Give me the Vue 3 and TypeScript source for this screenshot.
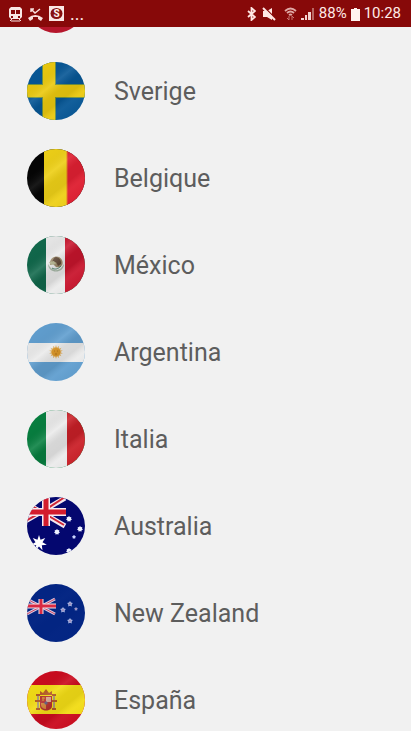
<script setup lang="ts">
type Shape = { d: string; fill?: string; stroke?: string; width?: number }
interface Country {
  id: string
  name: string
  base: string
  shapes: Shape[]
  gloss: number
}

/** Star polygon with alternating outer and inner radius. */
function star(cx: number, cy: number, r: number, points = 7, ratio = 0.45): string {
  const out: string[] = []
  for (let i = 0; i < points * 2; i++) {
    const radius = i % 2 ? r * ratio : r
    const a = (Math.PI * i) / points - Math.PI / 2
    out.push(`${(cx + radius * Math.cos(a)).toFixed(2)} ${(cy + radius * Math.sin(a)).toFixed(2)}`)
  }
  return `M${out.join('L')}Z`
}

const countries: Country[] = [
  { id: 'previous', name: '', base: '#b5162b', shapes: [], gloss: 0 },
  {
    id: 'se', name: 'Sverige', base: '#075796', gloss: 0.8,
    shapes: [
      { d: 'M15 0H29V58H15ZM0 22H58V36H0Z', fill: '#6f9345' },
      { d: 'M16 0H28V58H16ZM0 23H58V35H0Z', fill: '#ebc90f' },
    ],
  },
  {
    id: 'be', name: 'Belgique', base: '#050505', gloss: 0.7,
    shapes: [
      { d: 'M17 0H40V58H17Z', fill: '#eed018' },
      { d: 'M40 0H58V58H40Z', fill: '#df2032' },
      { d: 'M40 0V58', stroke: '#e87a20', width: 1 },
    ],
  },
  {
    id: 'mx', name: 'México', base: '#11694c', gloss: 1,
    shapes: [
      { d: 'M19 0H39V58H19Z', fill: '#ebebeb' },
      { d: 'M38 0H58V58H38Z', fill: '#c9152d' },
      { d: 'M21 28C21 38 37 38 37 28L34 32C31 35 26 35 23 31Z', fill: '#a9baa9' },
      { d: 'M23 26C24 20 32 18 35 24C37 29 34 32 29 31L26 28L23 29Z', fill: '#9b8a6a' },
      { d: 'M27 22C30 19 35 24 34 28L31 30L29 26L25 26Z', fill: '#604a38' },
      { d: 'M22 26L27 25L29 28L24 29Z', fill: '#b5b590' },
      { d: 'M25 32C28 34 31 33 34 30', stroke: '#4b8069', width: 1 },
    ],
  },
  {
    id: 'ar', name: 'Argentina', base: '#619fd0', gloss: 0.8,
    shapes: [
      { d: 'M0 20H58V39H0Z', fill: '#ebebeb' },
      { d: star(29, 29, 7, 14, 0.65), fill: '#e4bb77' },
      { d: star(29, 29, 5, 12, 0.8), fill: '#dc9727' },
      { d: 'M27 28H28M30 28H31M28 31H30', stroke: '#b5721a', width: 1 },
    ],
  },
  {
    id: 'it', name: 'Italia', base: '#078040', gloss: 1,
    shapes: [
      { d: 'M19 0H40V58H19Z', fill: '#ebebeb' },
      { d: 'M40 0H58V58H40Z', fill: '#cb2028' },
    ],
  },
  {
    id: 'au', name: 'Australia', base: '#04076f', gloss: 0,
    shapes: [
      { d: 'M-10 1L38 29M-10 29L38 1', stroke: '#f3e7ef', width: 5 },
      { d: 'M-10 0L15 15L-9 28M38 0L15 15L37 28', stroke: '#cf2637', width: 2 },
      { d: 'M19 0V29M0 15H39', stroke: '#f6eaf0', width: 8 },
      { d: 'M19 0V29M0 15H39', stroke: '#d31b2d', width: 5 },
      { d: star(12, 46, 8), fill: '#ffffff' },
      { d: star(30, 35, 3, 7, 0.7), fill: '#eef2ff' },
      { d: star(42, 22, 3, 7, 0.7), fill: '#eef2ff' },
      { d: star(53, 32, 3, 7, 0.7), fill: '#eef2ff' },
      { d: star(47, 40, 2, 5, 0.7), fill: '#cbd5ff' },
      { d: star(42, 54, 3, 7, 0.7), fill: '#eef2ff' },
    ],
  },
  {
    id: 'nz', name: 'New Zealand', base: '#032583', gloss: 0.1,
    shapes: [
      { d: 'M0 15L28 30M0 30L28 15', stroke: '#d9c9e2', width: 3 },
      { d: 'M0 15L28 30M0 30L28 15', stroke: '#cf4963', width: 1 },
      { d: 'M14 15V30M0 22H29', stroke: '#f2e4ea', width: 5 },
      { d: 'M14 15V30M0 22H29', stroke: '#da2943', width: 3 },
      { d: star(43, 20, 3, 5, 0.6) + star(36, 26, 3, 5, 0.6) + star(49, 25, 2, 5, 0.6) + star(43, 37, 3, 5, 0.6), fill: '#a8b4df' },
      { d: star(43, 20, 1, 5) + star(36, 26, 1, 5) + star(49, 25, 1, 5) + star(43, 37, 1, 5), fill: '#9a4b86' },
    ],
  },
  {
    id: 'es', name: 'España', base: '#cb0c1f', gloss: 0.7,
    shapes: [
      { d: 'M0 14H58V43H0Z', fill: '#f2dc16' },
      { d: 'M10 25H12V38H10ZM26 25H28V38H26Z', fill: '#a99b72' },
      { d: 'M8 30H13M25 30H30M9 38H13M25 38H29M9 24H13M25 24H29', stroke: '#b15b24', width: 2 },
      { d: 'M13 24L13 20L16 22L19 18L22 22L25 20L25 24Z', fill: '#b55a25' },
      { d: 'M13 25H25V35C25 41 13 41 13 35Z', fill: '#b4312d' },
      { d: 'M19 26H24V31H19Z', fill: '#d6a38c' },
      { d: 'M14 32H19V38C16 38 14 36 14 34Z', fill: '#d28438' },
      { d: 'M15 27H18M16 26V30', stroke: '#d1a02d', width: 1 },
      { d: 'M19 30L21 32L19 34L17 32Z', fill: '#635d7e' },
    ],
  },
]
</script>

<template>
  <div class="screen">
    <header class="status">
      <div class="notices">
        <svg width="13" height="16" viewBox="0 0 13 16" aria-hidden="true">
          <path d="M2 1H11L13 3V11L11 13H2L0 11V3Z" fill="#f9e8e5" />
          <path d="M2 4H6V8H2ZM7 4H11V8H7ZM2 10H4V12H2ZM9 10H11V12H9Z" fill="#870b0b" />
          <path d="M3 13L1 15M10 13L12 15M2 15H11" stroke="#f9e8e5" />
        </svg>
        <svg width="15" height="16" viewBox="0 0 15 16" aria-hidden="true">
          <path d="M3 6V3H6M3 3L7 7L12 3" fill="none" stroke="#f9e0de" stroke-width="1.5" />
          <path d="M0 12Q7 6 15 12L13 15L10 13V11H5V13L2 15Z" fill="#f9e0de" />
        </svg>
        <svg width="15" height="16" viewBox="0 0 15 16" aria-hidden="true">
          <path d="M0 0H15V15H0Z" fill="#fae8e5" />
          <ellipse cx="7.5" cy="7.5" rx="6" ry="5.5" fill="#87100f" />
          <text x="7.5" y="11" text-anchor="middle" class="coin">S</text>
        </svg>
        <span class="more">...</span>
      </div>
      <div class="system">
        <svg width="9" height="14" viewBox="0 0 9 14" aria-hidden="true">
          <path d="M1 4L8 10L4.500 13V1L8 4L1 10" fill="none" stroke="#ffe7e4" stroke-width="1.8" />
        </svg>
        <svg class="mute" width="14" height="14" viewBox="0 0 14 14" aria-hidden="true">
          <path d="M1 4H5L10 1V13L5 10H1Z" fill="#ffe7e4" />
          <path d="M3 1L14 12" stroke="#870b0b" stroke-width="1.5" />
          <path d="M1 1L13 13" stroke="#ffe7e4" stroke-width="2" />
        </svg>
        <svg width="13" height="14" viewBox="0 0 13 14" aria-hidden="true">
          <path d="M1 4Q6.5-1 12 4M3 6Q6.5 3 10 6M5 8Q6.5 7 8 8" fill="none" stroke="#e0aaa6" stroke-width="1.8" />
          <path d="M5 9V13M3 11L5 13M8 13V9M10 11L8 9" fill="none" stroke="#c87773" />
        </svg>
        <svg width="14" height="14" viewBox="0 0 14 14" aria-hidden="true">
          <path d="M0 13V11H3V13ZM4 13V8H6V13ZM7 13V5H10V13Z" fill="#f4d5d2" />
          <path d="M11 13V1H13V13Z" fill="#b86762" />
        </svg>
        <span>88%</span>
        <svg width="9" height="14" viewBox="0 0 9 14" aria-hidden="true">
          <path d="M0 2H3V1H6V2H9V14H0Z" fill="#fff3ef" />
        </svg>
        <time>10:28</time>
      </div>
    </header>

    <main class="viewport">
      <ul class="countries">
        <li v-for="country in countries" :key="country.id">
          <button type="button" class="country">
            <svg class="flag" viewBox="0 0 58 58" aria-hidden="true">
              <defs>
                <linearGradient :id="`gloss-${country.id}`" x1=".1" y1="0" x2=".9" y2="1">
                  <stop offset="0" stop-color="#000" stop-opacity="0" />
                  <stop offset=".25" stop-color="#000" stop-opacity=".04" />
                  <stop offset=".4" stop-color="#fff" stop-opacity=".12" />
                  <stop offset=".52" stop-color="#000" stop-opacity=".09" />
                  <stop offset=".64" stop-color="#000" stop-opacity=".1" />
                  <stop offset=".74" stop-color="#fff" stop-opacity=".06" />
                  <stop offset="1" stop-color="#000" stop-opacity=".03" />
                </linearGradient>
              </defs>
              <path d="M0 0H58V58H0Z" :fill="country.base" />
              <path
                v-for="(shape, i) in country.shapes"
                :key="i"
                :d="shape.d"
                :fill="shape.fill ?? 'none'"
                :stroke="shape.stroke"
                :stroke-width="shape.width"
              />
              <path d="M0 0H58V58H0Z" :fill="`url(#gloss-${country.id})`" :opacity="country.gloss" />
            </svg>
            <span class="name">{{ country.name }}</span>
          </button>
        </li>
      </ul>
    </main>
  </div>
</template>

<style>
body {
  margin: 0;
  background: #f1f1f1;
}
</style>

<style scoped>
.screen {
  display: flex;
  flex-direction: column;
  height: 100vh;
  overflow: hidden;
  background: #f1f1f1;
  font-family: Roboto, "Liberation Sans", sans-serif;
}

.status {
  display: flex;
  flex: none;
  align-items: center;
  justify-content: space-between;
  box-sizing: border-box;
  height: 27px;
  padding: 0 10px 0 9px;
  background: #870909;
  color: #ffe9e6;
  font-size: 15px;
  line-height: 27px;
}

.notices {
  display: flex;
  align-items: center;
  gap: 6px;
}

.system {
  display: flex;
  align-items: center;
  gap: 4px;
}

.mute {
  margin: 0 4px 0 2px;
}

.more {
  font-size: 18px;
}

.coin {
  fill: #fff3ef;
  font-size: 10px;
  font-weight: 700;
}

.viewport {
  flex: 1;
  min-height: 0;
  overflow: hidden;
}

.countries {
  margin: -67px 0 0;
  padding: 0;
  list-style: none;
}

.country {
  display: flex;
  align-items: center;
  gap: 29px;
  width: 100%;
  height: 87px;
  padding: 0 27px;
  border: 0;
  background: transparent;
  color: #5d5d5d;
  font: inherit;
  font-size: 25px;
  line-height: 32px;
  text-align: left;
}

.name {
  padding-top: 2px;
}

.flag {
  flex: none;
  width: 58px;
  height: 58px;
  border-radius: 50%;
}
</style>
